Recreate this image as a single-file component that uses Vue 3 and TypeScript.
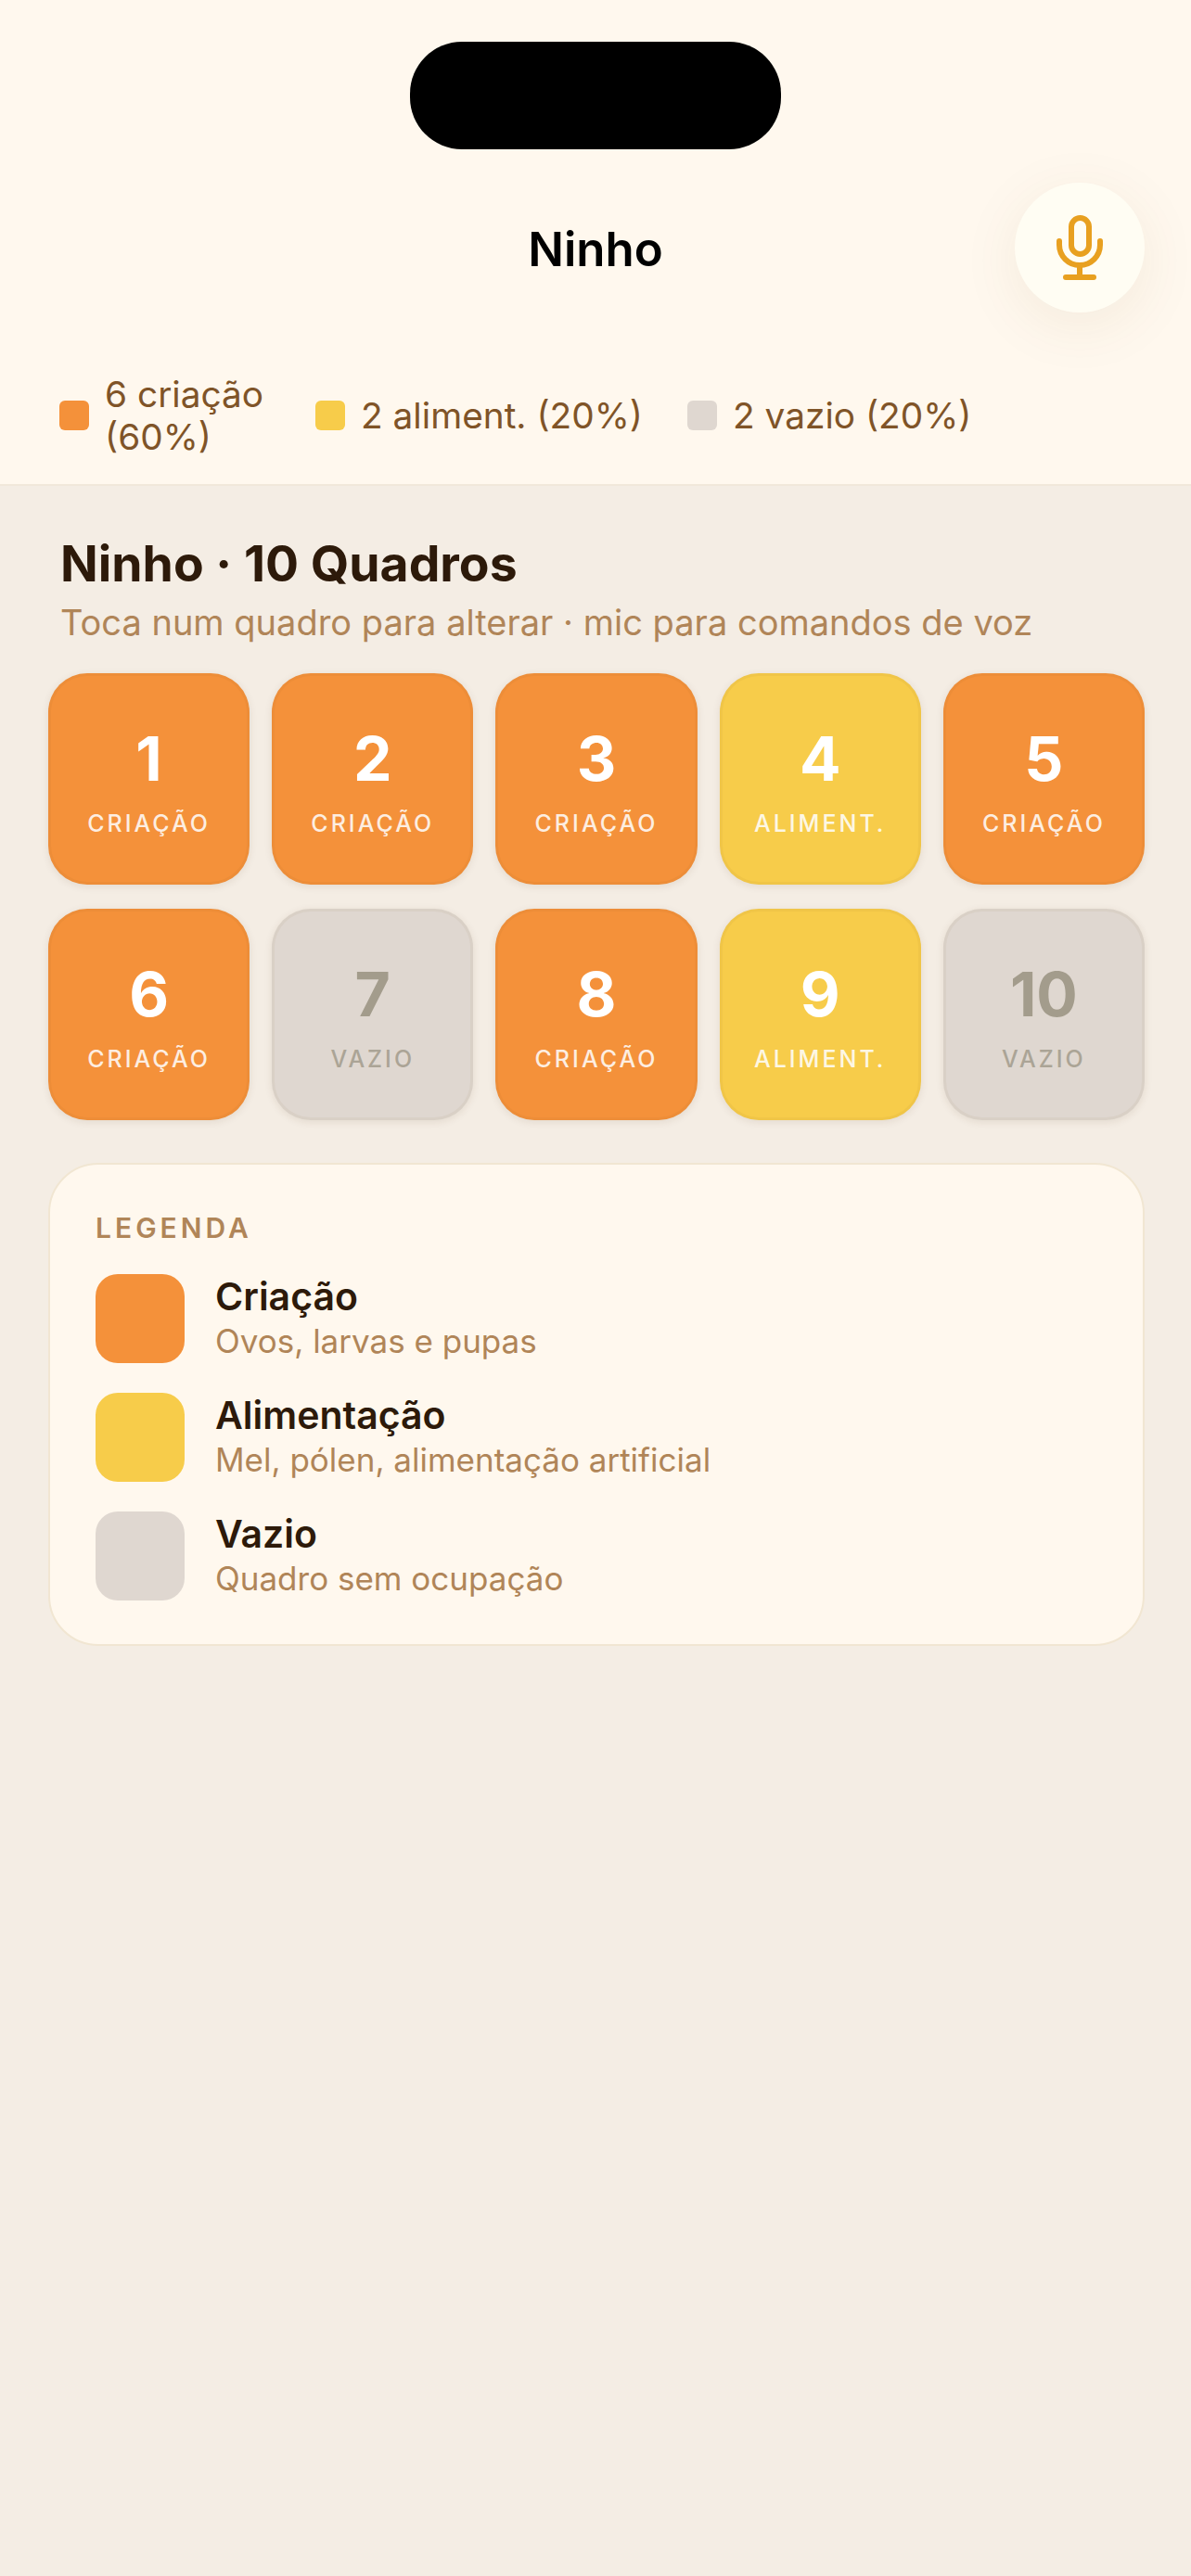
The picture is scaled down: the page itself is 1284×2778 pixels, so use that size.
<template>
  <div class="screen">
    <header class="top">
      <div class="island" />
      <div class="nav">
        <h1 class="nav-title">Ninho</h1>
        <button class="mic-btn" type="button" aria-label="Comandos de voz">
          <svg width="50" height="70" viewBox="0 0 50 70" fill="none" stroke="#e8a020" stroke-width="6" stroke-linecap="round" stroke-linejoin="round">
            <rect x="16" y="3" width="19" height="39" rx="9.5" />
            <path d="M3 28v4a22 22 0 0 0 44 0v-4" />
            <path d="M25 54v13" />
            <path d="M10 67h30" />
          </svg>
        </button>
      </div>
      <div class="summary">
        <div v-for="s in summary" :key="s.label" class="summary-item">
          <span class="summary-dot" :class="s.kind" />
          <span class="summary-text">{{ s.label }}</span>
        </div>
      </div>
    </header>

    <main class="body">
      <div class="heading">
        <h2 class="heading-title">Ninho · 10 Quadros</h2>
        <p class="heading-sub">Toca num quadro para alterar · mic para comandos de voz</p>
      </div>

      <div class="frames">
        <div v-for="f in frames" :key="f.n" class="frame" :class="f.kind">
          <span class="frame-num">{{ f.n }}</span>
          <span class="frame-label">{{ labels[f.kind] }}</span>
        </div>
      </div>

      <section class="legend">
        <div class="legend-title">LEGENDA</div>
        <div class="legend-list">
          <div v-for="l in legend" :key="l.name" class="legend-row">
            <span class="legend-swatch" :class="l.kind" />
            <div class="legend-text">
              <span class="legend-name">{{ l.name }}</span>
              <span class="legend-desc">{{ l.desc }}</span>
            </div>
          </div>
        </div>
      </section>
    </main>
  </div>
</template>

<script setup lang="ts">
type Kind = 'brood' | 'food' | 'empty'

const labels: Record<Kind, string> = {
  brood: 'CRIAÇÃO',
  food: 'ALIMENT.',
  empty: 'VAZIO'
}

const kinds: Kind[] = ['brood', 'brood', 'brood', 'food', 'brood', 'brood', 'empty', 'brood', 'food', 'empty']
const frames = kinds.map((kind, i) => ({ n: i + 1, kind }))

const summary: { kind: Kind; label: string }[] = [
  { kind: 'brood', label: '6 criação (60%)' },
  { kind: 'food', label: '2 aliment. (20%)' },
  { kind: 'empty', label: '2 vazio (20%)' }
]

const legend: { kind: Kind; name: string; desc: string }[] = [
  { kind: 'brood', name: 'Criação', desc: 'Ovos, larvas e pupas' },
  { kind: 'food', name: 'Alimentação', desc: 'Mel, pólen, alimentação artificial' },
  { kind: 'empty', name: 'Vazio', desc: 'Quadro sem ocupação' }
]
</script>

<style>
html,
body {
  background: #f4ede4;
}
</style>

<style scoped>
.screen {
  min-height: 2778px;
  display: flex;
  flex-direction: column;
  font-family: Inter, "Liberation Sans", sans-serif;
  background: #f4ede4;
}

.top {
  background: #fff8ee;
  border-bottom: 2px solid #f1e8da;
  padding-top: 45px;
  height: 524px;
  box-sizing: border-box;
}

.island {
  width: 400px;
  height: 116px;
  margin: 0 auto;
  background: #000;
  border-radius: 56px;
}

.nav {
  display: flex;
  align-items: center;
  justify-content: center;
  position: relative;
  margin-top: 36px;
  height: 140px;
}

.nav-title {
  margin: 3px 0 0;
  font-size: 51px;
  font-weight: 600;
  color: #000;
}

.mic-btn {
  position: absolute;
  right: 50px;
  top: 0;
  width: 140px;
  height: 140px;
  border: none;
  padding: 0;
  border-radius: 50%;
  background: #fffdf3;
  box-shadow: 0 14px 64px rgba(120, 80, 30, 0.08);
  display: flex;
  align-items: center;
  justify-content: center;
}

.summary {
  display: flex;
  align-items: center;
  gap: 48px;
  padding: 0 64px;
  margin-top: 65px;
}

.summary-item {
  display: flex;
  align-items: center;
  gap: 17px;
}

.summary-item:first-child {
  width: 228px;
}

.summary-dot {
  flex: none;
  width: 32px;
  height: 32px;
  border-radius: 6px;
}

.summary-text {
  font-size: 38.8px;
  line-height: 46px;
  color: #7f5428;
}

.brood {
  background: #f4913a;
}

.food {
  background: #f7cc4a;
}

.empty {
  background: #dfd7d0;
}

.body {
  padding: 0 50px 0 52px;
}

.heading {
  padding: 52px 13px 0;
}

.heading-title {
  margin: 0;
  font-size: 53.5px;
  line-height: 64px;
  font-weight: 700;
  color: #2d1a0a;
}

.heading-sub {
  margin: 8px 0 0;
  font-size: 38px;
  line-height: 46px;
  color: #b08558;
  white-space: nowrap;
}

.frames {
  display: grid;
  grid-template-columns: repeat(5, 1fr);
  gap: 26px 24px;
  margin-top: 32px;
}

.frame {
  height: 228px;
  box-sizing: border-box;
  border-radius: 42px;
  border: 3px solid rgba(120, 70, 20, 0.05);
  display: flex;
  flex-direction: column;
  align-items: center;
  justify-content: center;
  gap: 15px;
  padding-top: 2px;
  color: #fff;
  box-shadow: 0 2px 8px rgba(80, 50, 20, 0.1);
}

.frame.empty {
  color: #a39c8c;
}

.frame-num {
  font-size: 66px;
  line-height: 78px;
  font-weight: 700;
}

.frame-label {
  font-size: 25px;
  line-height: 32px;
  font-weight: 500;
  letter-spacing: 3px;
  opacity: 0.85;
}

.legend {
  margin-top: 46px;
  background: #fff8ee;
  border: 2px solid #f1e6d2;
  border-radius: 54px;
  padding: 50px 50px 47px 49px;
}

.legend-title {
  font-size: 30px;
  line-height: 36px;
  font-weight: 600;
  letter-spacing: 4px;
  color: #b08558;
}

.legend-list {
  display: flex;
  flex-direction: column;
  gap: 32px;
  margin-top: 32px;
}

.legend-row {
  display: flex;
  align-items: center;
  gap: 33px;
}

.legend-swatch {
  flex: none;
  width: 96px;
  height: 96px;
  border-radius: 24px;
}

.legend-text {
  display: flex;
  flex-direction: column;
}

.legend-name {
  font-size: 41px;
  line-height: 48px;
  font-weight: 600;
  color: #2d1a0a;
}

.legend-desc {
  font-size: 35px;
  line-height: 48px;
  color: #b08558;
}
</style>
